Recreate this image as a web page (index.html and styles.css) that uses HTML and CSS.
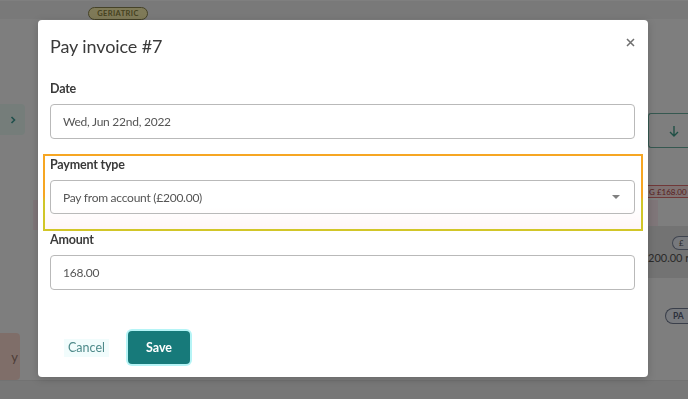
FILE: index.html
```html
<!DOCTYPE html>
<html lang="en">
<head>
<meta charset="utf-8">
<title>Pay invoice</title>
<link rel="stylesheet" href="styles.css">
</head>
<body>
<div class="page">
  <div class="topbar"></div>
  <span class="badge-geriatric">GERIATRIC</span>
  <div class="side-toggle">
    <svg width="10" height="10" viewBox="0 0 10 10"><path d="M3.5 2 L6.5 5 L3.5 8" fill="none" stroke="#3f9f98" stroke-width="1.6"/></svg>
  </div>
  <div class="left-pink"></div>
  <div class="left-btn">y</div>
  <div class="right-arrow">
    <svg width="14" height="14" viewBox="0 0 14 14"><path d="M7 2 V12 M3 8 L7 12 L11 8" fill="none" stroke="#3f9f8a" stroke-width="1.4"/></svg>
  </div>
  <div class="right-owing">G £168.00</div>
  <div class="right-pink"></div>
  <div class="right-band">
    <span class="pill-pound">£</span>
    <span class="band-text">200.00 re</span>
  </div>
  <span class="pill-pa">PA</span>
  <div class="bottombar"></div>
</div>
<div class="backdrop"></div>

<div class="modal" role="dialog">
  <div class="modal-header">
    <h2 class="modal-title">Pay invoice #7</h2>
    <button class="close" aria-label="Close">
      <svg width="9" height="9" viewBox="0 0 9 9"><path d="M1 1 L8 8 M8 1 L1 8" stroke="#6f6f6f" stroke-width="1.5"/></svg>
    </button>
  </div>
  <div class="modal-body">
    <div class="field">
      <label class="label">Date</label>
      <div class="input">Wed, Jun 22nd, 2022</div>
    </div>
    <div class="highlight">
      <div class="field">
        <label class="label">Payment type</label>
        <div class="input select">
          <span>Pay from account (£200.00)</span>
          <span class="caret"></span>
        </div>
      </div>
    </div>
    <div class="field">
      <label class="label">Amount</label>
      <div class="input">168.00</div>
    </div>
  </div>
  <div class="modal-footer">
    <button class="btn-cancel">Cancel</button>
    <button class="btn-save">Save</button>
  </div>
</div>
</body>
</html>
```
FILE: styles.css
```css
* { box-sizing: border-box; }
html, body {
  margin: 0;
  width: 688px;
  height: 399px;
  overflow: hidden;
  font-family: "Lato", "Open Sans", sans-serif;
}
body { background: #fdfdfd; position: relative; }

.page { position: absolute; inset: 0; background: #fdfdfd; }
.backdrop { position: fixed; inset: 0; background: rgba(0, 0, 0, 0.5); }
.topbar { position: absolute; left: 0; right: 0; top: 0; height: 19px; background: #f3f3f3; border-top: 1px solid #ffffff; }
.badge-geriatric {
  position: absolute; left: 88px; top: 7px; width: 60px; height: 13px;
  border: 1px solid #8a8450; border-radius: 7px; background: #fff4b0;
  color: #8c8440; font-size: 7.5px; font-weight: 700; letter-spacing: .4px;
  display: flex; align-items: center; justify-content: center;
}
.side-toggle {
  position: absolute; left: 0; top: 104px; width: 25px; height: 31px;
  background: #eafaf4; border-radius: 0 4px 4px 0;
  display: flex; align-items: center; justify-content: center;
}
.left-pink { position: absolute; left: 33px; top: 200px; width: 5px; height: 30px; background: #ffecf2; }
.left-btn {
  position: absolute; left: 0; top: 333px; width: 20px; height: 47px;
  background: #ffddd2; border-radius: 0 4px 4px 0; color: #9a7a70;
  font-size: 13px; display: flex; align-items: center; justify-content: flex-end; padding-right: 2px;
}
.right-arrow {
  position: absolute; left: 648px; top: 113px; width: 40px; height: 35px;
  border: 1px solid #6ab0a0; border-right: 0; border-radius: 3px 0 0 3px; background: #fdfdfd;
  display: flex; align-items: center; padding-left: 18px;
}
.right-owing {
  position: absolute; left: 646px; top: 185px; width: 42px; height: 13px;
  border: 1px solid #e07070; border-right: 0; background: #ffe4e4; color: #b04040;
  font-size: 8px; display: flex; align-items: center; padding-left: 2px; white-space: nowrap; overflow: hidden;
}
.right-pink { position: absolute; left: 648px; top: 200px; width: 10px; height: 26px; background: #ffecf2; }
.right-band { position: absolute; left: 648px; top: 226px; width: 40px; height: 52px; background: #e6e6e6; overflow: hidden; }
.pill-pound {
  position: absolute; left: 24px; top: 10px; width: 16px; height: 14px;
  border: 1px solid #808aa0; border-right: 0; border-radius: 7px 0 0 7px; background: #eef2fa;
  font-size: 8px; color: #555; padding-left: 6px; line-height: 12px;
}
.band-text { position: absolute; left: 0; top: 25px; font-size: 11px; color: #555; white-space: nowrap; }
.pill-pa {
  position: absolute; left: 665px; top: 308px; width: 23px; height: 16px;
  border: 1px solid #747e94; border-right: 0; border-radius: 8px 0 0 8px; background: #f0f4fc;
  font-size: 8.5px; font-weight: 700; color: #58627a; padding-left: 7px; line-height: 14px;
}
.bottombar { position: absolute; left: 0; right: 0; top: 380px; height: 19px; background: #eeeeee; border-top: 1px solid #e4e4e4; }

.modal {
  position: absolute; left: 38px; top: 20px; width: 610px; height: 357px;
  background: #fff; border-radius: 4px;
  box-shadow: 0 2px 8px rgba(0,0,0,.18);
  padding: 0 13px 0 12px;
  display: flex; flex-direction: column;
}
.modal-header {
  height: 50px; display: flex; align-items: center; justify-content: space-between;
  padding-top: 1px;
}
.modal-title { margin: 0; font-size: 18px; font-weight: 400; color: #3a3a3a; letter-spacing: -0.1px; }
.close {
  border: 0; background: none; padding: 0; width: 10px; height: 10px;
  display: flex; align-items: center; justify-content: center; margin-top: -6px;
}
.modal-body { padding-top: 10px; display: flex; flex-direction: column; }
.field { display: flex; flex-direction: column; gap: 6px; }
.label { font-size: 12.5px; font-weight: 700; color: #3a3a3a; line-height: 18px; height: 18px; letter-spacing: -0.2px; }
.input {
  height: 35px; border: 1px solid #b9b9b9; border-radius: 4px;
  padding: 0 12px; display: flex; align-items: center;
  font-size: 12px; letter-spacing: -0.25px; color: #555;
}
.select { height: 34px; justify-content: space-between; padding-right: 14px; }
.caret { width: 0; height: 0; border-left: 4px solid transparent; border-right: 4px solid transparent; border-top: 4px solid #808080; }
.highlight {
  margin: 15px -8px 0 -7px;
  padding: 0 6px 15px 5px;
  border: 2px solid;
  border-image: linear-gradient(to bottom, #f6a623 0%, #f6a623 55%, #cfc62a 62%, #d2c628 100%) 1;
  background: linear-gradient(to bottom, #fff 70%, #fff6f8 100%);
}
.modal-footer { margin-top: 41px; display: flex; align-items: center; gap: 7px; }
.btn-cancel {
  border: 0; background: #f1fcfc; color: #4e8a8a; font-family: inherit;
  font-size: 12.5px; height: 18px; padding: 0 4px; margin-left: 14px; margin-right: 12px;
}
.btn-save {
  height: 33px; width: 62px; border: 0; border-radius: 4px;
  background: #177a7a; color: #fff; font-family: inherit; font-weight: 700; font-size: 12.5px;
  box-shadow: 0 0 0 2px #b5f4f6;
}
```
